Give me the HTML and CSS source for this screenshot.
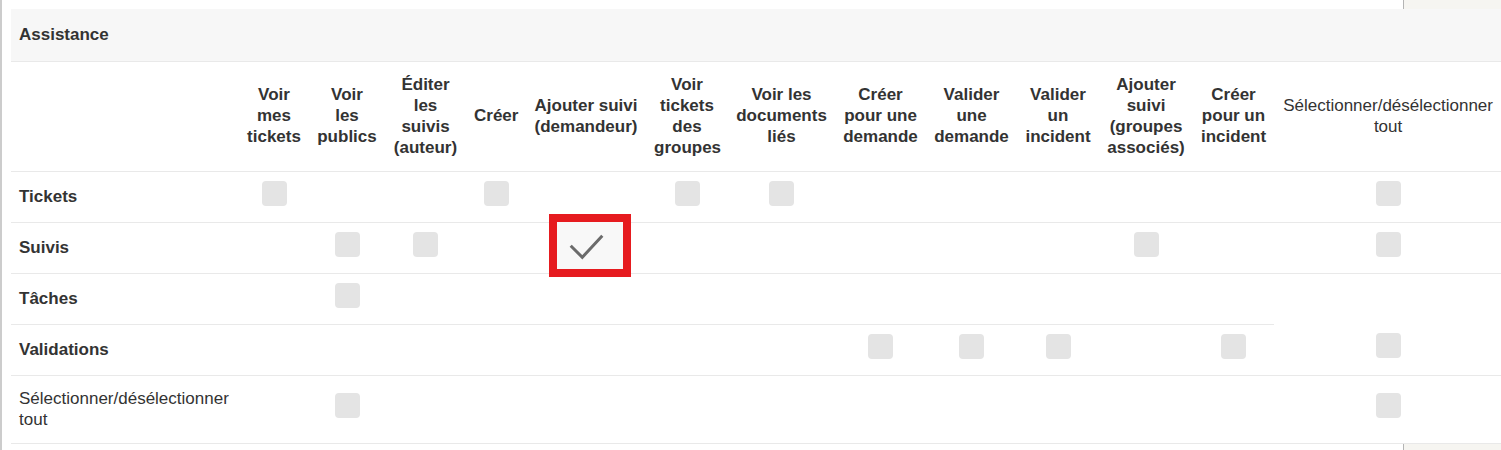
FILE: index.html
```html
<!DOCTYPE html>
<html lang="fr">
<head>
<meta charset="utf-8">
<title>Assistance</title>
<link rel="stylesheet" href="styles.css">
</head>
<body>
<div class="page">
  <table class="perm">
    <colgroup>
      <col class="w-label"><col class="w70"><col class="w76"><col class="w81"><col class="w60"><col class="w120"><col class="w82"><col class="w107"><col class="w91"><col class="w91"><col class="w82"><col class="w94"><col class="w81"><col class="w-all">
    </colgroup>
    <thead>
      <tr class="section"><th colspan="14">Assistance</th></tr>
      <tr class="heads">
        <th></th>
        <th>Voir mes tickets</th>
        <th>Voir les publics</th>
        <th>Éditer les suivis (auteur)</th>
        <th>Créer</th>
        <th>Ajouter suivi (demandeur)</th>
        <th>Voir tickets des groupes</th>
        <th>Voir les documents liés</th>
        <th>Créer pour une demande</th>
        <th>Valider une demande</th>
        <th>Valider un incident</th>
        <th>Ajouter suivi (groupes associés)</th>
        <th>Créer pour un incident</th>
        <th class="plain">Sélectionner/désélectionner tout</th>
      </tr>
    </thead>
    <tbody>
      <tr class="row">
        <th>Tickets</th>
        <td><span class="cb"></span></td><td></td><td></td>
        <td><span class="cb"></span></td><td></td>
        <td><span class="cb"></span></td>
        <td><span class="cb"></span></td>
        <td></td><td></td><td></td><td></td><td></td>
        <td><span class="cb"></span></td>
      </tr>
      <tr class="row">
        <th>Suivis</th>
        <td></td>
        <td><span class="cb"></span></td>
        <td><span class="cb"></span></td>
        <td></td>
        <td></td>
        <td></td><td></td><td></td><td></td><td></td>
        <td><span class="cb"></span></td>
        <td></td>
        <td><span class="cb"></span></td>
      </tr>
      <tr class="row">
        <th>Tâches</th>
        <td></td>
        <td><span class="cb"></span></td>
        <td></td><td></td><td></td><td></td><td></td><td></td><td></td><td></td><td></td><td></td>
      </tr>
      <tr class="row">
        <th>Validations</th>
        <td></td><td></td><td></td><td></td><td></td><td></td><td></td>
        <td><span class="cb"></span></td>
        <td><span class="cb"></span></td>
        <td><span class="cb"></span></td>
        <td></td>
        <td><span class="cb"></span></td>
        <td><span class="cb"></span></td>
      </tr>
      <tr class="row last">
        <th class="plain">Sélectionner/désélectionner tout</th>
        <td></td>
        <td><span class="cb"></span></td>
        <td></td><td></td><td></td><td></td><td></td><td></td><td></td><td></td><td></td><td></td>
        <td><span class="cb"></span></td>
      </tr>
    </tbody>
  </table>
  <div class="highlight">
    <svg class="check" width="66" height="47" viewBox="0 0 66 47">
      <path d="M13.7 23.7 L25.3 35.3 L45.3 13.7" fill="none" stroke="#6b6b6b" stroke-width="3"/>
    </svg>
  </div>
</div>
</body>
</html>
```

FILE: styles.css
```css
html, body {
  margin: 0;
  padding: 0;
  overflow: hidden;
  background: #f6f5f1;
}

.page {
  position: relative;
  box-sizing: border-box;
  width: 1404px;
  min-height: 470px;
  background: #ffffff;
  border-left: 2px solid #cccccc;
  border-right: 1px solid #b4b4b4;
  padding: 9px 0 20px 9px;
  font-family: "Liberation Sans", Arial, sans-serif;
  font-size: 17px;
  line-height: 21px;
  color: #333333;
}

.perm {
  border-collapse: collapse;
  table-layout: fixed;
  width: 1491px;
  background: #ffffff;
}

.w-label { width: 228px; }
.w70 { width: 70px; }
.w76 { width: 76px; }
.w81 { width: 81px; }
.w60 { width: 60px; }
.w120 { width: 120px; }
.w82 { width: 82px; }
.w107 { width: 107px; }
.w91 { width: 91px; }
.w94 { width: 94px; }
.w-all { width: 228px; }

.perm th,
.perm td {
  padding: 0 8px 2px;
  border-bottom: 1px solid #e9e9e9;
  vertical-align: middle;
}

.section th {
  background: #f7f7f7;
  text-align: left;
  font-weight: bold;
  height: 50px;
}

.heads th {
  height: 107px;
  text-align: center;
  font-weight: bold;
}

.perm .plain {
  font-weight: normal;
}

.row th {
  text-align: left;
  font-weight: bold;
}

.row th,
.row td {
  height: 48px;
}

.row td {
  text-align: center;
}

.row.last th,
.row.last td {
  height: 65px;
}

.cb {
  display: block;
  width: 25px;
  height: 25px;
  margin: 0 auto 6px;
  border-radius: 4px;
  background: #e4e4e4;
}

.highlight {
  position: absolute;
  left: 547px;
  top: 214px;
  width: 66px;
  height: 47px;
  border: 8px solid #e61b1f;
  background: #f8f8f8;
}

.check {
  display: block;
}
```
